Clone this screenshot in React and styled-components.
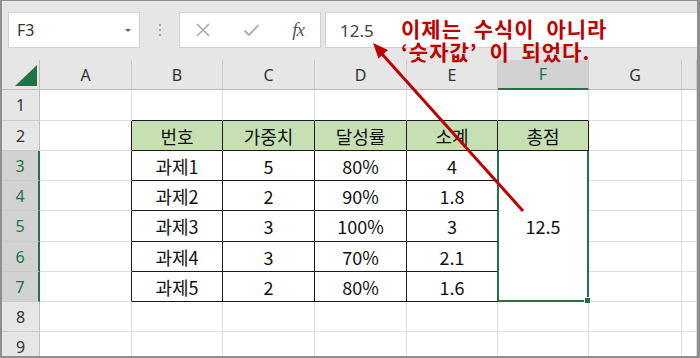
import React from "react";
import styled, { createGlobalStyle } from "styled-components";

const GREEN = "#217346";
const RED = "#c00000";
const GRID = "#dedede";

const GlobalStyle = createGlobalStyle`
  html, body { margin: 0; padding: 0; background: #fff; overflow: hidden; }
  body { font-family: "Noto Sans", "Noto Sans CJK KR", sans-serif; }
`;

const Frame = styled.div`
  position: relative;
  width: 700px;
  height: 358px;
  box-sizing: border-box;
  border: 2px solid #8e8e8e;
  border-top-width: 1px;
  border-right-width: 3px;
  background: #e6e6e6;
  display: flex;
  flex-direction: column;
  overflow: hidden;
`;

const FormulaBar = styled.div`
  height: 59px;
  flex: none;
  display: flex;
  align-items: flex-start;
  padding: 11px 0 0 6px;
  box-sizing: border-box;
`;

const NameBox = styled.div`
  width: 132px;
  height: 36px;
  box-sizing: border-box;
  background: #fff;
  border: 1px solid #d0d0d0;
  display: flex;
  align-items: center;
  justify-content: space-between;
  padding: 0 8px 0 8px;
  font-size: 16px;
  color: #333;
`;

const Caret = styled.span`
  width: 0;
  height: 0;
  border-left: 3px solid transparent;
  border-right: 3px solid transparent;
  border-top: 3px solid #666;
`;

const Grip = styled.div`
  width: 39px;
  height: 36px;
  display: flex;
  flex-direction: column;
  align-items: center;
  justify-content: center;
  gap: 3px;
  span {
    width: 2px;
    height: 2px;
    background: #a8a8a8;
  }
`;

const ButtonBox = styled.div`
  width: 142px;
  height: 36px;
  box-sizing: border-box;
  background: #fff;
  border: 1px solid #d0d0d0;
  display: flex;
  align-items: center;
  justify-content: space-between;
  padding: 0 16px 0 15px;
`;

const Fx = styled.span`
  font-family: "Liberation Serif", serif;
  font-style: italic;
  font-size: 19px;
  color: #555;
  letter-spacing: -1px;
`;

const FormulaInput = styled.div`
  flex: 1;
  margin-left: 4px;
  height: 36px;
  box-sizing: border-box;
  background: #fff;
  border: 1px solid #d0d0d0;
  border-right: none;
  display: flex;
  align-items: center;
  padding-left: 14px;
  font-size: 17px;
  color: #444;
`;

const Sheet = styled.div`
  flex: 1;
  display: grid;
  grid-template-columns: 38px 92px 91px 92px 92px 91px 91px 93px 15px;
  grid-template-rows: 30px 31px 30px 30px 30px 31px 30px 30px 30px 30px;
  background: #fff;
`;

const ColHead = styled.div`
  background: ${(p) => (p.$active ? "#d2d2d2" : "#e6e6e6")};
  color: ${(p) => (p.$active ? GREEN : "#333")};
  border-right: 1px solid #cacaca;
  border-bottom: ${(p) => (p.$active ? `2px solid ${GREEN}` : "1px solid #bcbcbc")};
  box-sizing: border-box;
  display: flex;
  align-items: center;
  justify-content: center;
  font-size: 16px;
`;

const Corner = styled.div`
  background: #e6e6e6;
  border-right: 1px solid #bcbcbc;
  border-bottom: 1px solid #bcbcbc;
  box-sizing: border-box;
  display: flex;
  align-items: flex-end;
  justify-content: flex-end;
  padding: 0 2px 3px 0;
`;

const RowHead = styled.div`
  background: ${(p) => (p.$active ? "#d2d2d2" : "#e6e6e6")};
  color: ${(p) => (p.$active ? GREEN : "#333")};
  border-right: ${(p) => (p.$active ? `2px solid ${GREEN}` : "1px solid #bcbcbc")};
  border-bottom: 1px solid #cacaca;
  box-sizing: border-box;
  display: flex;
  align-items: center;
  justify-content: center;
  font-size: 16px;
`;

const Cell = styled.div`
  background: ${(p) => p.$bg || "#fff"};
  border-right: 1px solid ${(p) => p.$right};
  border-bottom: 1px solid ${(p) => p.$bottom};
  box-sizing: border-box;
  display: flex;
  align-items: center;
  justify-content: center;
  font-family: "Noto Sans CJK KR", sans-serif;
  font-size: 18px;
  color: #111;
`;

const MergedCell = styled.div`
  grid-column: 7;
  grid-row: 4 / span 5;
  position: relative;
  border-left: 1px solid ${GREEN};
  border-right: 2px solid ${GREEN};
  border-bottom: 2px solid ${GREEN};
  box-sizing: border-box;
  display: flex;
  align-items: center;
  justify-content: center;
  font-family: "Noto Sans CJK KR", sans-serif;
  font-size: 18px;
  color: #111;
`;

const Handle = styled.span`
  position: absolute;
  right: -4px;
  bottom: -4px;
  width: 5px;
  height: 5px;
  background: ${GREEN};
  border: 1px solid #fff;
`;

const Note = styled.div`
  position: absolute;
  left: 399px;
  top: 16px;
  font-family: "Noto Sans CJK KR", sans-serif;
  font-weight: 700;
  font-size: 21px;
  line-height: 23px;
  letter-spacing: 1px;
  word-spacing: 6px;
  color: ${RED};
  white-space: nowrap;
`;

const Overlay = styled.svg`
  position: absolute;
  left: -2px;
  top: -1px;
  pointer-events: none;
`;

const letters = ["A", "B", "C", "D", "E", "F", "G", ""];

const data = {
  2: ["번호", "가중치", "달성률", "소계", "총점"],
  3: ["과제1", "5", "80%", "4"],
  4: ["과제2", "2", "90%", "1.8"],
  5: ["과제3", "3", "100%", "3"],
  6: ["과제4", "3", "70%", "2.1"],
  7: ["과제5", "2", "80%", "1.6"],
};

// column index: A=1 ... H=8; table is B2:F7
const inTable = (r, c) => r >= 2 && r <= 7 && c >= 2 && c <= 6;

function bodyCell(r, c) {
  if (c === 6 && r >= 3 && r <= 7) return null;
  let right = inTable(r, c) || inTable(r, c + 1) ? "#1a1a1a" : GRID;
  if (c === 5 && r >= 3 && r <= 7) right = GREEN;
  const bottom = inTable(r, c) || inTable(r + 1, c) ? "#1a1a1a" : GRID;
  const bg = r === 2 && inTable(r, c) ? "#c6e0b4" : null;
  const text = data[r] && c >= 2 ? data[r][c - 2] : "";
  return (
    <Cell key={`${r}-${c}`} $right={right} $bottom={bottom} $bg={bg}>
      {text}
    </Cell>
  );
}

export default function App() {
  const rows = [1, 2, 3, 4, 5, 6, 7, 8, 9];
  return (
    <>
      <GlobalStyle />
      <Frame>
        <FormulaBar>
          <NameBox>
            F3
            <Caret />
          </NameBox>
          <Grip>
            <span />
            <span />
            <span />
          </Grip>
          <ButtonBox>
            <svg width="16" height="16" viewBox="0 0 16 16">
              <path d="M2 2 L14 14 M14 2 L2 14" stroke="#aaa" strokeWidth="1.6" fill="none" />
            </svg>
            <svg width="17" height="14" viewBox="0 0 17 14">
              <path d="M1.5 7.5 L6 12 L15.5 2" stroke="#aaa" strokeWidth="1.8" fill="none" />
            </svg>
            <Fx>fx</Fx>
          </ButtonBox>
          <FormulaInput>12.5</FormulaInput>
        </FormulaBar>

        <Sheet>
          <Corner>
            <svg width="22" height="21" viewBox="0 0 22 21">
              <polygon points="22,0 22,21 0,21" fill={GREEN} />
            </svg>
          </Corner>
          {letters.map((l, i) => (
            <ColHead key={i} $active={l === "F"}>
              {l}
            </ColHead>
          ))}
          {rows.map((r) => (
            <React.Fragment key={r}>
              <RowHead $active={r >= 3 && r <= 7}>{r}</RowHead>
              {[1, 2, 3, 4, 5, 6, 7, 8].map((c) => bodyCell(r, c))}
            </React.Fragment>
          ))}
          <MergedCell>
            12.5
            <Handle />
          </MergedCell>
        </Sheet>

        <Note>
          <div>이제는 수식이 아니라</div>
          <div>‘숫자값’ 이 되었다.</div>
        </Note>

        <Overlay width="700" height="358" viewBox="0 0 700 358">
          <line x1="523" y1="211" x2="382" y2="54" stroke={RED} strokeWidth="3" />
          <polygon points="373,43 388,50 378.5,58.5" fill={RED} />
        </Overlay>
      </Frame>
    </>
  );
}
